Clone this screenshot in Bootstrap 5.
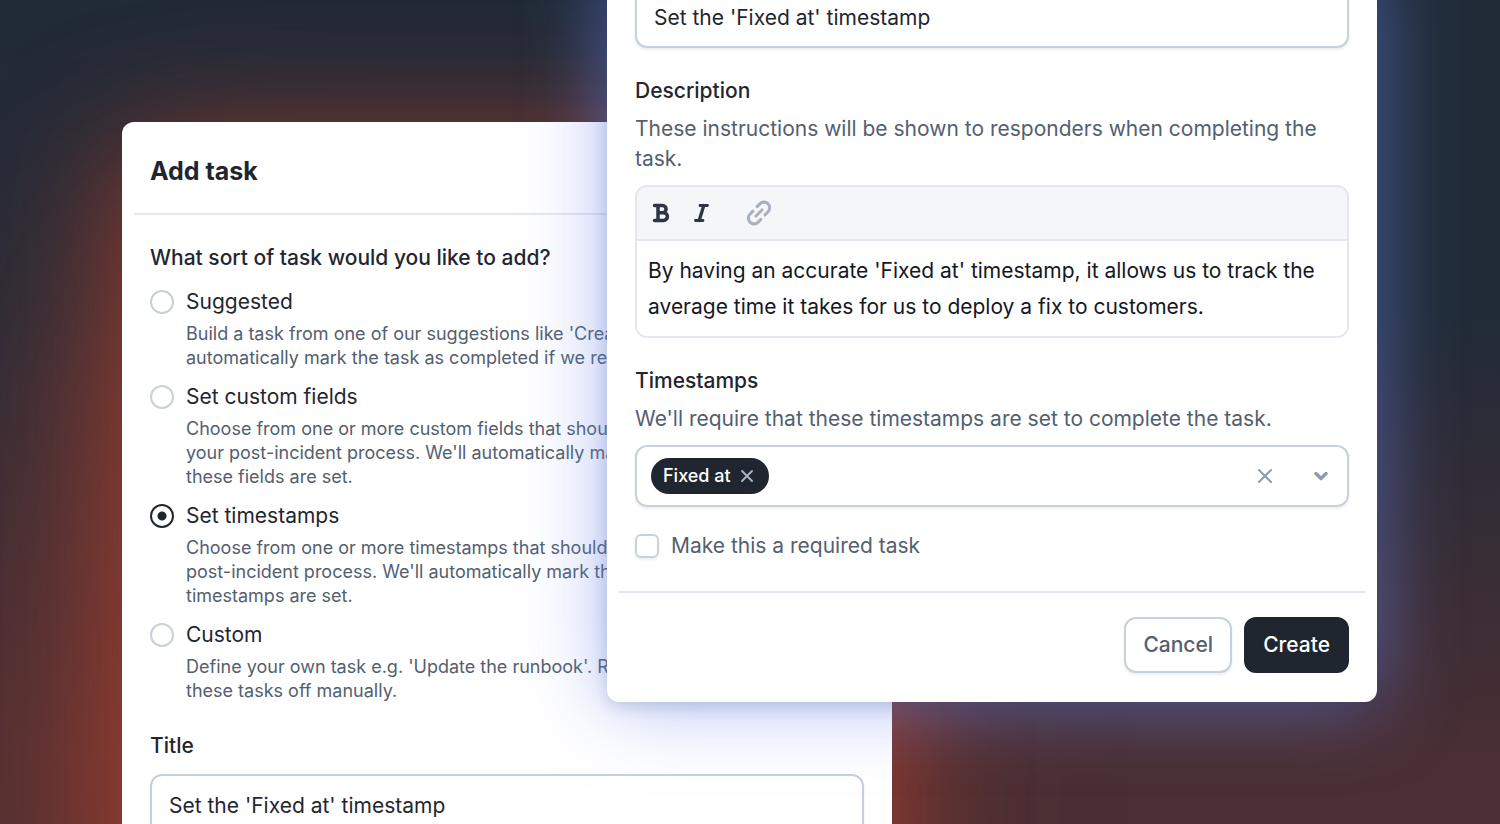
<!DOCTYPE html>
<html lang="en">
<head>
<meta charset="utf-8">
<meta name="viewport" content="width=device-width, initial-scale=1">
<title>Add task</title>
<link href="https://cdn.jsdelivr.net/npm/bootstrap@5.3.0/dist/css/bootstrap.min.css" rel="stylesheet">
<style>
:root { --ink: #1f2630; --muted: #53606f; --line: #c8d0dc; --soft: #e4e8ee; --faint: #8f9bae; }
body { font-family: Inter, "Liberation Sans", sans-serif; font-size: 21px; line-height: 30px; color: var(--ink); background: #212b38; }

/* Two dialogs share one grid row and overlap in the middle column */
.stage {
  display: grid; height: 100vh; overflow: hidden;
  grid-template-columns: 122fr 485fr 285fr 485fr 123fr; grid-template-rows: 100%;
  background: linear-gradient(180deg, #212b38 38%, #4a2f34 92%);
}
.panel { grid-row: 1; align-self: start; background: #fff; border-radius: 12px; min-width: 0; }
.panel-back {
  grid-column: 2 / 4; margin-top: 122px; min-height: 100vh;
  box-shadow: 0 20px 120px rgba(190, 64, 40, .62), -50px 100px 240px rgba(180, 70, 50, .5);
}
.panel-front {
  grid-column: 3 / 5; z-index: 1; margin-top: -42px;
  box-shadow: 0 4px 16px rgba(40, 50, 90, .18), 0 0 80px rgba(110, 136, 240, .6);
}
.panel-in { padding: 28px; }
.rule { height: 2px; margin: 0 12px; background: var(--soft); border: 0; opacity: 1; }
.rule-front { margin-top: 30px; }

.panel-title { font-size: 25px; line-height: 36px; font-weight: 700; margin: 0; padding: 31px 28px 24px; }
.field-label { font-size: 21px; line-height: 30px; font-weight: 500; margin: 28px 0 0; display: block; }
.help { color: var(--muted); margin: 8px 0 11px; }
.field { border: 2px solid var(--line); border-radius: 12px; height: 62px; padding: 0 17px; font-size: 21px; color: var(--ink); box-shadow: 0 2px 3px rgba(31, 38, 48, .08); }

.options .field-label { margin: 0 0 14px; }
.option { display: grid; grid-template-columns: 24px 1fr; column-gap: 12px; align-items: center; margin-bottom: 12px; }
.option p { grid-column: 2; font-size: 18px; line-height: 24px; color: var(--muted); margin: 5px 0 0; }
.form-check-input { width: 24px; height: 24px; margin: 0; float: none; border: 2px solid var(--line); background-color: #fff; flex: none; }
.form-check-input:checked[type=radio] { border-color: var(--ink); background-color: #fff; background-image: radial-gradient(circle, var(--ink) 4px, transparent 5px); }
.form-check-input[type=checkbox] { border-radius: 6px; box-shadow: 0 2px 3px rgba(31, 38, 48, .08); }
.title-label { margin: 28px 0 13px; }

.editor { border: 2px solid var(--soft); border-radius: 12px; overflow: hidden; }
.tools { background: #f5f6f8; border-bottom: 2px solid var(--soft); height: 54px; padding: 0 12px; color: #2c3644; }
.plain { border: 0; background: none; padding: 0; display: flex; color: inherit; }
.tools .plain + .plain { margin-left: 16px; }
.tools .plain.link-tool { margin-left: 33px; color: #a9b1bf; }
.editor-text { border: 0; resize: none; padding: 12px 11px 11px; height: 95px; line-height: 36px; width: 100%; display: block; color: #14181f; overflow: hidden; outline: 0; }

.picker { padding: 0 14px; }
.chip { background: var(--ink); color: #fff; border-radius: 18px; height: 36px; padding: 0 14px 0 12px; font-size: 18px; font-weight: 500; gap: 8px; }
.chip .plain { color: #a9b1bf; }
.picker-tools { gap: 36px; color: var(--faint); margin-right: 2px; }
.required-row { gap: 12px; margin-top: 24px; color: var(--muted); }

.actions { gap: 12px; padding: 24px 28px 29px; }
.btn { --bs-btn-font-size: 21px; --bs-btn-font-weight: 500; --bs-btn-line-height: 30px; height: 56px; border-radius: 12px; padding: 0 17px; border-width: 2px; }
.btn-cancel { color: var(--muted); border-color: var(--line); background: #fff; box-shadow: 0 2px 3px rgba(31, 38, 48, .08); }
.btn-create { color: #fff; background: var(--ink); border-color: var(--ink); }
</style>
</head>
<body>
<main class="stage">
  <section class="panel panel-back" aria-labelledby="add-title">
    <h1 class="panel-title" id="add-title">Add task</h1>
    <hr class="rule">
    <form class="panel-in">
      <fieldset class="options">
        <legend class="field-label">What sort of task would you like to add?</legend>
        <div class="option">
          <input class="form-check-input" type="radio" name="kind" id="k1"><label for="k1">Suggested</label>
          <p>Build a task from one of our suggestions like 'Create'.<br>automatically mark the task as completed if we record</p>
        </div>
        <div class="option">
          <input class="form-check-input" type="radio" name="kind" id="k2"><label for="k2">Set custom fields</label>
          <p>Choose from one or more custom fields that should<br>your post-incident process. We'll automatically mark<br>these fields are set.</p>
        </div>
        <div class="option">
          <input class="form-check-input" type="radio" name="kind" id="k3" checked><label for="k3">Set timestamps</label>
          <p>Choose from one or more timestamps that should<br>post-incident process. We'll automatically mark the<br>timestamps are set.</p>
        </div>
        <div class="option mb-0">
          <input class="form-check-input" type="radio" name="kind" id="k4"><label for="k4">Custom</label>
          <p>Define your own task e.g. 'Update the runbook'. Reply<br>these tasks off manually.</p>
        </div>
      </fieldset>
      <label class="field-label title-label" for="back-title">Title</label>
      <input class="form-control field" id="back-title" value="Set the 'Fixed at' timestamp">
    </form>
  </section>

  <section class="panel panel-front" aria-label="Task details">
    <form>
      <div class="panel-in pb-0">
        <input class="form-control field" aria-label="Title" value="Set the 'Fixed at' timestamp">

        <label class="field-label" for="desc">Description</label>
        <p class="help">These instructions will be shown to responders when completing the task.</p>
        <div class="editor">
          <div class="tools d-flex align-items-center">
            <button type="button" class="plain" aria-label="Bold">
              <svg width="24" height="24" viewBox="0 0 24 24" fill="none" stroke="currentColor" stroke-width="3"><path d="M5.500 4.500h8a3.600 3.600 0 0 1 0 7.200H9M5.500 19.500h9a3.900 3.900 0 0 0 0-7.800H9M9 4.500v15" stroke-width="3.500" stroke-linejoin="round" stroke-linecap="round"/></svg>
            </button>
            <button type="button" class="plain" aria-label="Italic">
              <svg width="24" height="24" viewBox="0 0 24 24" fill="none" stroke="currentColor" stroke-linecap="round"><path d="M11 4.500h7.500M6.500 19.500H14" stroke-width="2.800"/><path d="M14.800 4.500l-4.600 15" stroke-width="3.300"/></svg>
            </button>
            <button type="button" class="plain link-tool" aria-label="Link">
              <svg width="26" height="26" viewBox="0 0 24 24" fill="none" stroke="currentColor" stroke-width="2.800" stroke-linecap="round"><path d="M9.200 14.800l5.600-5.600"/><path d="M10.300 6.100l2.500-2.500a5.100 5.100 0 0 1 7.600 7.200l-2.900 2.900"/><path d="M13.700 17.900l-2.500 2.500a5.100 5.100 0 0 1-7.600-7.200l2.900-2.900"/></svg>
            </button>
          </div>
          <textarea class="editor-text" id="desc">By having an accurate 'Fixed at' timestamp, it allows us to track the average time it takes for us to deploy a fix to customers.</textarea>
        </div>

        <h2 class="field-label">Timestamps</h2>
        <p class="help">We'll require that these timestamps are set to complete the task.</p>
        <div class="field picker d-flex align-items-center justify-content-between">
          <span class="chip d-flex align-items-center">Fixed at
            <button type="button" class="plain" aria-label="Remove Fixed at">
              <svg width="16" height="16" viewBox="0 0 16 16" fill="none" stroke="currentColor" stroke-width="2" stroke-linecap="round"><path d="M3 3l10 10M13 3L3 13"/></svg>
            </button>
          </span>
          <span class="picker-tools d-flex align-items-center">
            <button type="button" class="plain" aria-label="Clear">
              <svg width="20" height="20" viewBox="0 0 20 20" fill="none" stroke="currentColor" stroke-width="2" stroke-linecap="round"><path d="M4 4l12 12M16 4L4 16"/></svg>
            </button>
            <button type="button" class="plain" aria-label="Open list">
              <svg width="20" height="20" viewBox="0 0 20 20" fill="none" stroke="currentColor" stroke-width="3.500" stroke-linecap="round" stroke-linejoin="round"><path d="M5 7.500l5 5 5-5"/></svg>
            </button>
          </span>
        </div>
        <div class="required-row d-flex align-items-center">
          <input class="form-check-input" type="checkbox" id="required"><label for="required">Make this a required task</label>
        </div>
      </div>
      <hr class="rule rule-front">
      <div class="actions d-flex justify-content-end">
        <button type="button" class="btn btn-cancel">Cancel</button>
        <button type="button" class="btn btn-create">Create</button>
      </div>
    </form>
  </section>
</main>
<script src="https://cdn.jsdelivr.net/npm/bootstrap@5.3.0/dist/js/bootstrap.bundle.min.js"></script>
</body>
</html>
